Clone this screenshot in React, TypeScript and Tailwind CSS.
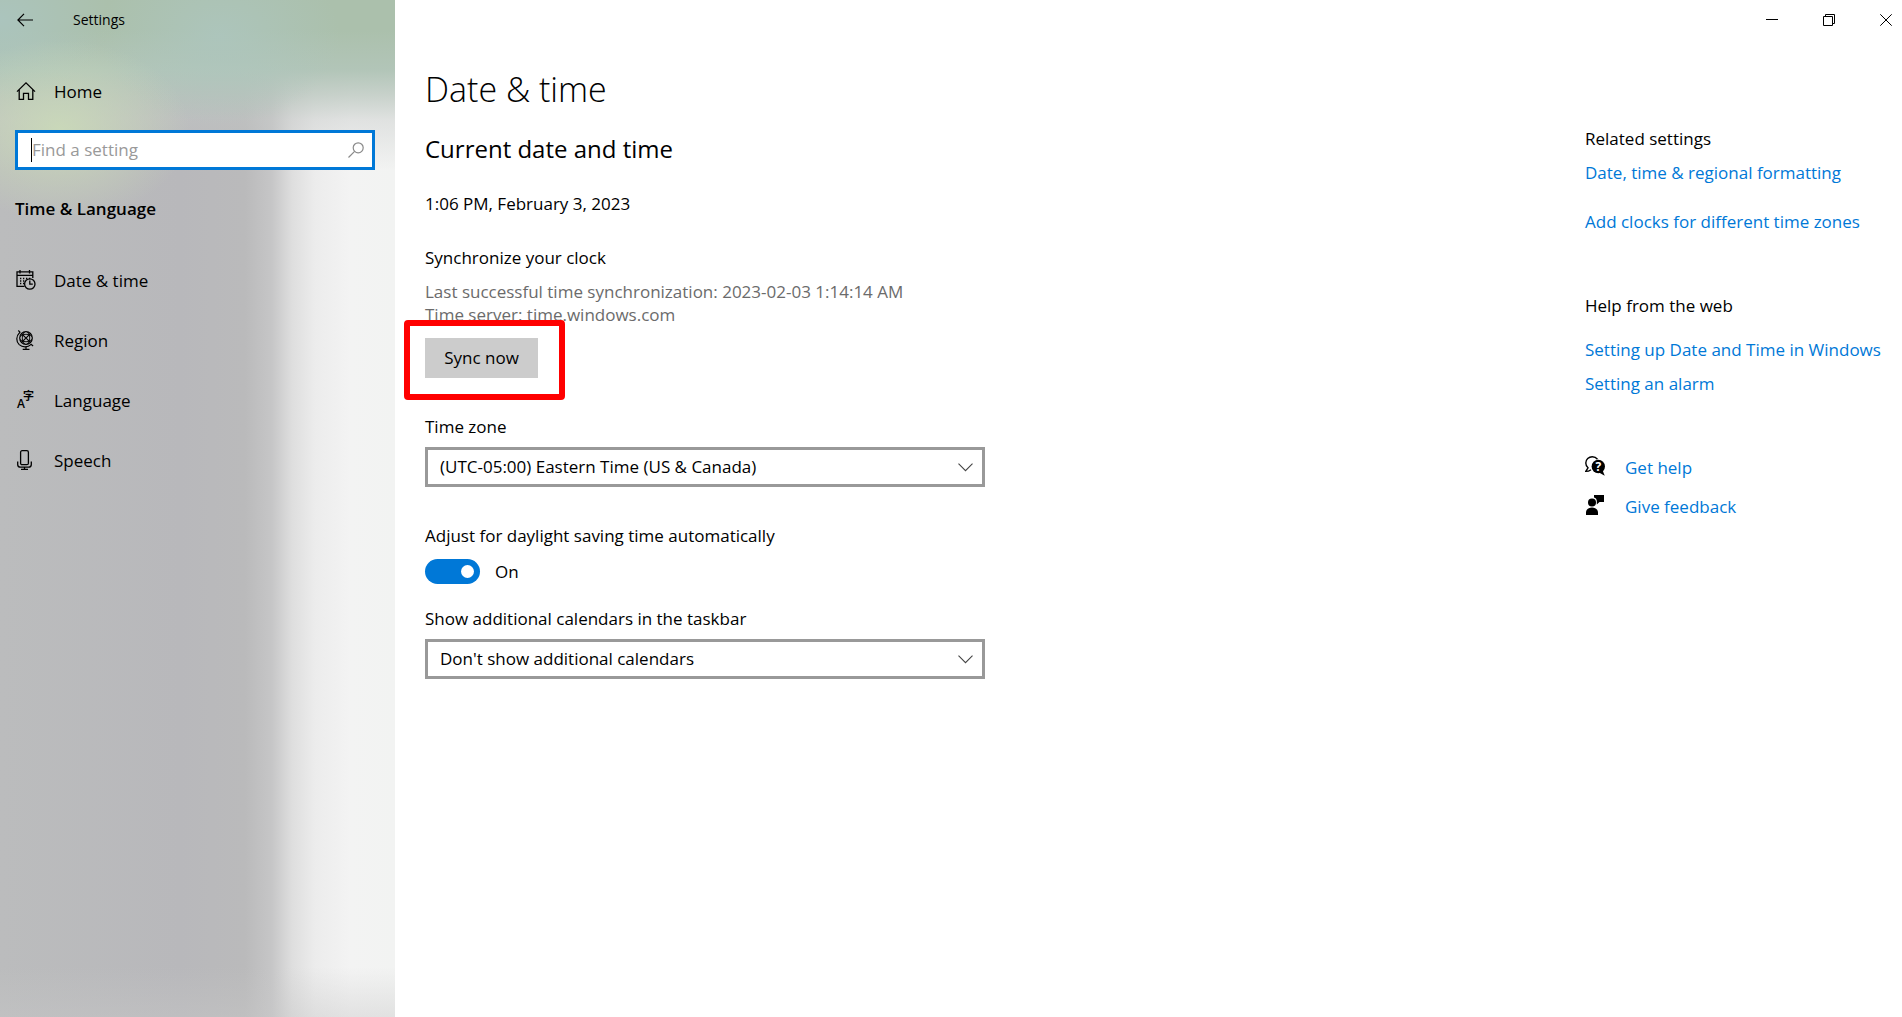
import { useState } from "react";

const navItems = [
  { label: "Date & time", icon: <CalendarIcon /> },
  { label: "Region", icon: <GlobeIcon /> },
  { label: "Language", icon: <LanguageIcon /> },
  { label: "Speech", icon: <MicIcon /> },
];

const text = "text-[17px] leading-[23px]";
const link = "text-[#0078d7] hover:text-gray-500";

function BackIcon() {
  return (
    <svg width="16" height="14" viewBox="0 0 16 14" fill="none" stroke="currentColor" strokeWidth="1.2">
      <path d="M7 .8.9 7 7 13.2M1 7h15" />
    </svg>
  );
}

function HomeIcon() {
  return (
    <svg width="20" height="20" viewBox="0 0 20 20" fill="none" stroke="currentColor" strokeWidth="1.3">
      <path d="M1 10.6 10 1.8l9 8.8M3.2 8.6v9.7h4.3v-6h5v6h4.3V8.6" />
    </svg>
  );
}

function CalendarIcon() {
  return (
    <svg width="20" height="20" viewBox="0 0 20 20" fill="none" stroke="currentColor" strokeWidth="1.3">
      <path d="M8.5 16.4H1V1.9h15.8v6.2M1 5.4h15.8M4 0v3.4M13.5 0v3.4" />
      <path d="M4 8.5h1.3M7 8.5h1.3M10 8.5h1.3M13 8.5h1.3M4 11h1.3M7 11h1.3M4 13.5h1.3M7 13.5h1.3" />
      <circle cx="13.8" cy="14" r="5.2" />
      <path d="M13.8 10.5v3.7h3" />
    </svg>
  );
}

function GlobeIcon() {
  return (
    <svg width="20" height="20" viewBox="0 0 20 20" fill="none" stroke="currentColor" strokeWidth="1.2">
      <circle cx="10" cy="8" r="6.3" />
      <path d="M5.5 3.6 14.400 12.400M14.400 3.600 5.600 12.400" />
      <path d="M4 6.500Q10 2 16 6.500M4 9.500Q10 14 16 9.500M8.500 2Q4 8 8.500 14M11.500 2Q16 8 11.500 14" strokeWidth=".9" />
      <path d="M2.300.5l1.700 1.700C-.3 6.500 0 11.500 3.200 14.600c3.300 3 8.600 3 11.900-.3l2 1.700" />
      <path d="M10 16.800v2.500M6.700 19.300h6.800" />
    </svg>
  );
}

function LanguageIcon() {
  return (
    <svg className="overflow-visible" width="20" height="20" viewBox="0 0 20 20" fill="currentColor">
      <text x="1" y="18" fontSize="12" fontWeight="600" fontFamily="Open Sans, sans-serif">A</text>
      <text x="7" y="10" fontSize="11" fontWeight="700" fontFamily="Noto Sans CJK SC, sans-serif">字</text>
    </svg>
  );
}

function MicIcon() {
  return (
    <svg width="20" height="20" viewBox="0 0 20 20" fill="none" stroke="currentColor" strokeWidth="1.3">
      <rect x="4.6" y=".7" width="7.8" height="14" rx="1.5" />
      <path d="M1.7 11.5v3q0 2.7 2.7 2.7h8.2q2.7 0 2.7-2.7v-3M8.5 17.2v2.2M5 19.3h7" />
    </svg>
  );
}

function SearchIcon() {
  return (
    <svg width="16" height="16" viewBox="0 0 16 16" fill="none" stroke="#8a8a8a" strokeWidth="1.2">
      <circle cx="10.2" cy="5.8" r="5" />
      <path d="M6.6 9.4.5 15.5" />
    </svg>
  );
}

function HelpIcon() {
  return (
    <svg width="20" height="20" viewBox="0 0 20 20" fill="none">
      <path d="M12.5 3.2C11.3 1.7 9.4.7 7.3.7 3.7.7.8 3.5.8 7c0 2 .9 3.7 2.2 4.8L.8 15.4c2 0 3.7-.6 5.2-1.7" stroke="#000" strokeWidth="1.4" />
      <circle cx="13.3" cy="10.5" r="6.7" fill="#000" />
      <path d="m14 16.5 5.7 3.2-2-5.2z" fill="#000" />
      <text x="13.3" y="15" fontSize="12" fontWeight="700" textAnchor="middle" fill="#fff" fontFamily="Open Sans, sans-serif">?</text>
    </svg>
  );
}

function FeedbackIcon() {
  return (
    <svg width="20" height="20" viewBox="0 0 20 20" fill="#000">
      <circle cx="7" cy="7.5" r="4" />
      <path d="M1 20v-2.500C1 14.500 3.500 12.500 7 12.500s6 2 6 5V20zM9 0h10v7h-4.500l-2.700 2.600V6.500C12 4.500 11 3 9 2.400z" />
    </svg>
  );
}

function Dropdown({ id, label, options }: { id: string; label: string; options: string[] }) {
  return (
    <div className="flex flex-col gap-[9px]">
      <label htmlFor={id} className={text}>{label}</label>
      <div className="relative max-w-[560px]">
        <select id={id} className="h-10 w-full appearance-none border-3 border-[#999] bg-white pl-3 pr-10 text-[17px] focus:outline-none">
          {options.map((o) => <option key={o}>{o}</option>)}
        </select>
        <svg className="pointer-events-none absolute right-3 top-4" width="15" height="9" viewBox="0 0 15 9" fill="none" stroke="#444" strokeWidth="1.1">
          <path d="m.5.7 7 7 7-7" />
        </svg>
      </div>
    </div>
  );
}

export default function App() {
  const [search, setSearch] = useState("");
  const [dst, setDst] = useState(true);

  return (
    <div className="flex min-h-screen bg-white font-['Open_Sans',sans-serif] text-black">
      <aside className="w-[395px] shrink-0 bg-[radial-gradient(ellipse_130px_90px_at_60px_130px,#cbdcb8dd,#cbdcb800),radial-gradient(ellipse_120px_90px_at_220px_35px,#adc6bfcc,#adc6bf00),radial-gradient(ellipse_110px_80px_at_0px_20px,#abc5c0dd,#abc5c000),linear-gradient(180deg,#abc0ac_0px,#abc0ac_30px,#b2c5b8_70px,#b8c5bcbb_95px,#c4c8c666_120px,#c4c8c600_170px),linear-gradient(0deg,#c8c8c866_0px,#c8c8c800_50px),linear-gradient(90deg,#bbbcbd_0px,#b8b8bb_180px,#bababb_245px,#c6c6c7_272px,#dedede_292px,#ececec_315px,#f3f3f3_350px,#f2f3f2_395px)]">
        <div className="flex h-10 items-center gap-10 pl-[17px]">
          <button aria-label="Back"><BackIcon /></button>
          <span className="text-sm">Settings</span>
        </div>

        <a href="#home" className="mt-[39px] flex h-6 items-center gap-[18px] pl-4">
          <HomeIcon />
          <span className={text}>Home</span>
        </a>

        <div className="group mx-[15px] mr-5 mt-[27px] flex h-10 items-center border-3 border-[#0078d7] bg-white pl-[13px] pr-2">
          <span className="h-6 w-px bg-black group-focus-within:hidden" />
          <input
            aria-label="Find a setting"
            value={search}
            onChange={(e) => setSearch(e.target.value)}
            placeholder="Find a setting"
            className="min-w-0 flex-1 bg-transparent text-[17px] placeholder-[#999] focus:outline-none"
          />
          <button aria-label="Search"><SearchIcon /></button>
        </div>

        <h2 className="mt-[27px] pl-[15px] text-[17px] font-semibold leading-[23px]">Time &amp; Language</h2>

        <nav className="mt-[30px]">
          {navItems.map((item) => (
            <a key={item.label} href="#settings" className="flex h-[60px] items-center gap-[18px] pl-4">
              {item.icon}
              <span className={text}>{item.label}</span>
            </a>
          ))}
        </nav>
      </aside>

      <div className="flex min-w-0 flex-1 flex-col">
        <header className="flex h-10 items-center justify-end gap-[45px] pr-[10px]">
          <button aria-label="Minimize">
            <svg width="12" height="12" viewBox="0 0 12 12" stroke="#000"><path d="M0 5.5h12" /></svg>
          </button>
          <button aria-label="Restore">
            <svg width="12" height="12" viewBox="0 0 12 12" fill="none" stroke="#000">
              <path d="M.5 2.5h9v9h-9zM2.5 2.5v-2h9v9h-2" />
            </svg>
          </button>
          <button aria-label="Close">
            <svg width="12" height="12" viewBox="0 0 12 12" stroke="#000"><path d="m.3.3 11.4 11.4M11.7.3.3 11.7" /></svg>
          </button>
        </header>

        <div className="flex flex-1 justify-between gap-10 pl-[30px]">
          <main className="min-w-0 flex-1 pt-[25px]">
            <h1 className="text-[34px] font-light leading-[48px]">Date &amp; time</h1>
            <h2 className="mt-5 text-2xl leading-8">Current date and time</h2>
            <p className={`mt-[27px] ${text}`}>1:06 PM, February 3, 2023</p>
            <h3 className={`mt-[31px] ${text}`}>Synchronize your clock</h3>
            <div className={`mt-[11px] text-[#6b6b6b] ${text}`}>
              <p>Last successful time synchronization: 2023-02-03 1:14:14 AM</p>
              <p>Time server: time.windows.com</p>
            </div>
            <div className="relative mt-3 w-fit">
              <button className="h-10 w-[113px] bg-[#ccc] text-[17px]">Sync now</button>
              <div className="pointer-events-none absolute -left-[21px] -top-[18px] h-20 w-[161px] rounded-sm border-6 border-[#f00]" />
            </div>

            <div className="mt-[37px]">
              <Dropdown id="timezone" label="Time zone" options={["(UTC-05:00) Eastern Time (US & Canada)"]} />
            </div>

            <div className="mt-[37px]">
              <label htmlFor="dst" className={`block ${text}`}>Adjust for daylight saving time automatically</label>
              <div className="mt-3 flex h-[25px] items-center gap-[15px]">
                <input
                  id="dst"
                  type="checkbox"
                  role="switch"
                  checked={dst}
                  onChange={(e) => setDst(e.target.checked)}
                  className="flex h-[25px] w-[55px] appearance-none items-center rounded-full bg-gray-500 px-[6px] before:size-[13px] before:rounded-full before:bg-white checked:justify-end checked:bg-[#0078d7]"
                />
                <span className={text}>{dst ? "On" : "Off"}</span>
              </div>
            </div>

            <div className="mt-[23px]">
              <Dropdown id="calendars" label="Show additional calendars in the taskbar" options={["Don't show additional calendars"]} />
            </div>
          </main>

          <section className={`flex w-[317px] shrink-0 flex-col items-start whitespace-nowrap pt-[87px] ${text}`}>
            <h3>Related settings</h3>
            <a href="#region" className={`mt-[11px] ${link}`}>Date, time &amp; regional formatting</a>
            <a href="#clocks" className={`mt-[26px] ${link}`}>Add clocks for different time zones</a>
            <h3 className="mt-[61px]">Help from the web</h3>
            <a href="#setup" className={`mt-[21px] ${link}`}>Setting up Date and Time in Windows</a>
            <a href="#alarm" className={`mt-[11px] ${link}`}>Setting an alarm</a>
            <a href="#help" className={`mt-[61px] flex gap-5 ${link}`}><HelpIcon />Get help</a>
            <a href="#feedback" className={`mt-4 flex gap-5 ${link}`}><FeedbackIcon />Give feedback</a>
          </section>
        </div>
      </div>
    </div>
  );
}
